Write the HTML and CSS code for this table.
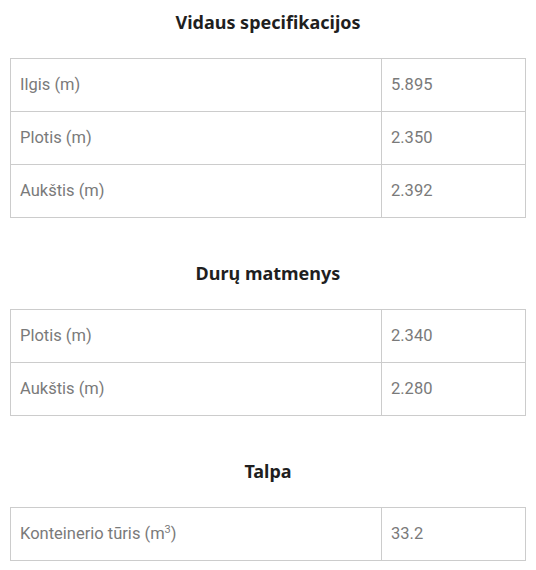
FILE: index.html
```html
<!DOCTYPE html>
<html lang="lt">
<head>
<meta charset="utf-8">
<link rel="stylesheet" href="styles.css">
</head>
<body>
<div class="page">
  <section class="spec">
    <h2 class="spec-title">Vidaus specifikacijos</h2>
    <table class="spec-table">
      <tr><td class="label">Ilgis (m)</td><td class="value">5.895</td></tr>
      <tr><td class="label">Plotis (m)</td><td class="value">2.350</td></tr>
      <tr><td class="label">Aukštis (m)</td><td class="value">2.392</td></tr>
    </table>
  </section>
  <section class="spec">
    <h2 class="spec-title">Durų matmenys</h2>
    <table class="spec-table">
      <tr><td class="label">Plotis (m)</td><td class="value">2.340</td></tr>
      <tr><td class="label">Aukštis (m)</td><td class="value">2.280</td></tr>
    </table>
  </section>
  <section class="spec">
    <h2 class="spec-title">Talpa</h2>
    <table class="spec-table">
      <tr><td class="label">Konteinerio tūris (m<sup>3</sup>)</td><td class="value">33.2</td></tr>
    </table>
  </section>
</div>
</body>
</html>
```

FILE: styles.css
```css
html, body {
  margin: 0;
  padding: 0;
  background: #fff;
}

.page {
  padding: 8px 10px 0 10px;
  width: 516px;
}

.spec {
  margin-bottom: 41px;
}

.spec:last-child {
  margin-bottom: 0;
}

.spec-title {
  margin: 0 0 22px 0;
  font-family: "Noto Sans", "Open Sans", sans-serif;
  font-weight: 700;
  font-size: 18px;
  line-height: 28px;
  color: #1f1f1f;
  text-align: center;
}

.spec-table {
  width: 100%;
  border-collapse: collapse;
  font-family: Roboto, "Liberation Sans", sans-serif;
  font-size: 16.5px;
  color: #7a7a7a;
}

.spec-table td {
  border: 1px solid #cccccc;
  padding: 14px 10px 14px 9px;
  line-height: 24px;
  vertical-align: middle;
}

.spec-table .label {
  width: 351px;
}

.spec-table sup {
  font-size: 11px;
  line-height: 0;
  vertical-align: 6px;
}
```
